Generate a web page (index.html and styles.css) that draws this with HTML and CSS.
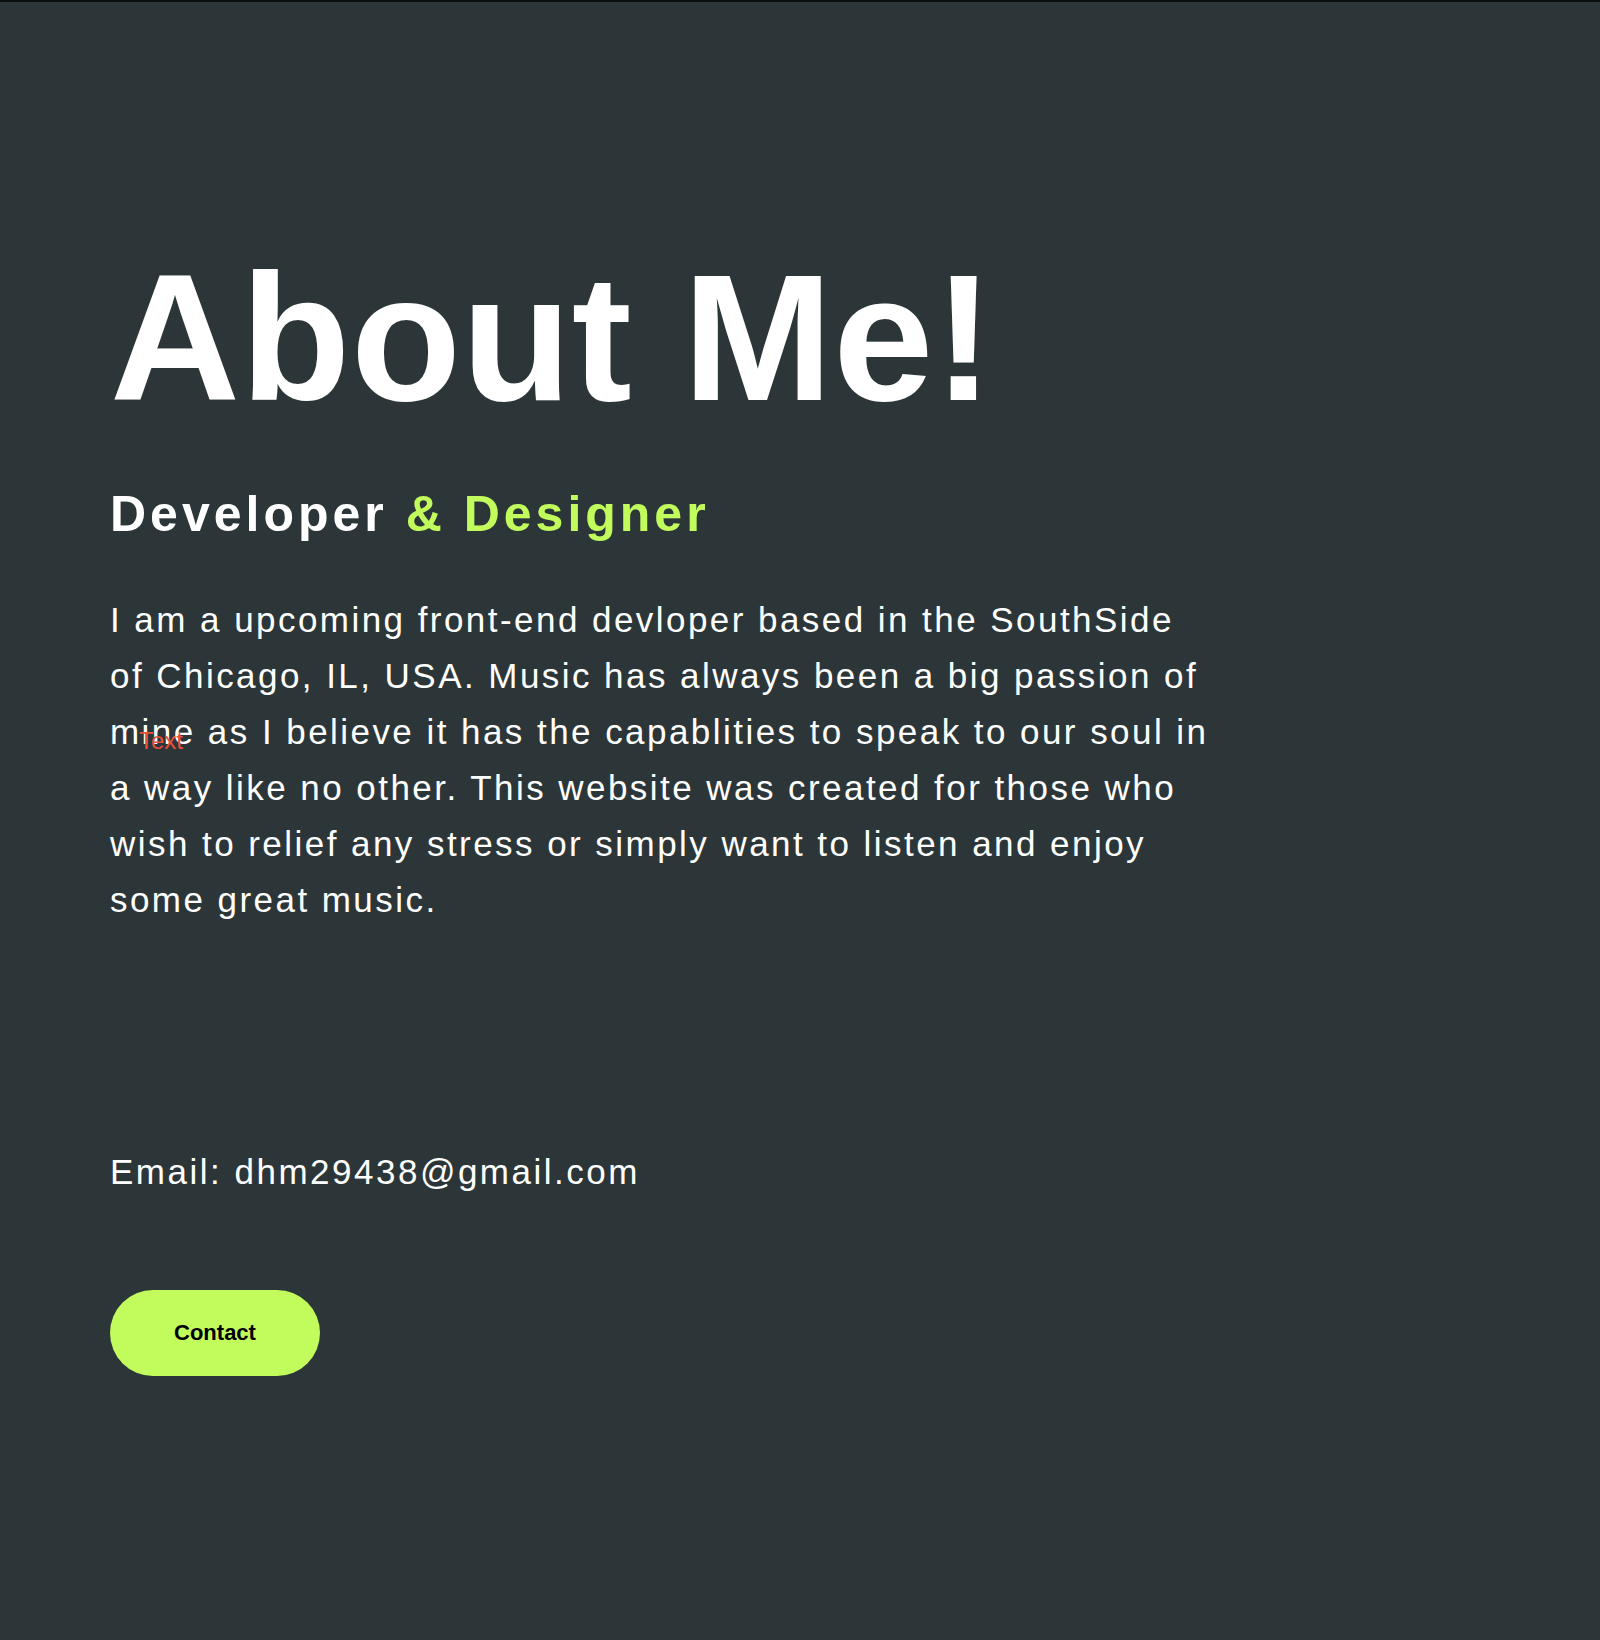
FILE: index.html
```html
<!DOCTYPE html>
<html lang="en">
<head>
<meta charset="utf-8">
<title>About Me</title>
<link rel="stylesheet" href="styles.css">
</head>
<body>
<main class="about">
  <h1 class="title">About Me!</h1>
  <h2 class="subtitle">Developer <span class="accent">&amp; Designer</span></h2>
  <div class="bio-wrap">
    <p class="bio">I am a upcoming front-end devloper based in the SouthSide of Chicago, IL, USA. Music has always been a big passion of mine as I believe it has the capablities to speak to our soul in a way like no other. This website was created for those who wish to relief any stress or simply want to listen and enjoy some great music.</p>
    <span class="tag">Text</span>
  </div>
  <p class="email">Email: dhm29438@gmail.com</p>
  <a class="contact" href="#">Contact</a>
</main>
</body>
</html>
```
FILE: styles.css
```css
html, body {
  margin: 0;
  padding: 0;
}
body {
  background: #2c3639;
  border-top: 2px solid #0c0f10;
  min-height: 1638px;
  font-family: "Liberation Sans", Arial, Helvetica, sans-serif;
  color: #ffffff;
}
.about {
  padding: 232px 0 0 110px;
  display: flex;
  flex-direction: column;
  align-items: flex-start;
}
.title {
  margin: 0;
  font-size: 180px;
  line-height: 207px;
  font-weight: 700;
  letter-spacing: 0.5px;
}
.subtitle {
  margin: 44px 0 0 0;
  font-size: 50px;
  line-height: 58px;
  font-weight: 700;
  letter-spacing: 4px;
}
.accent {
  color: #c2fb5c;
}
.bio-wrap {
  position: relative;
  margin-top: 49px;
  width: 1102px;
}
.bio {
  margin: 0;
  font-size: 35px;
  line-height: 56px;
  letter-spacing: 2.45px;
}
.tag {
  position: absolute;
  left: 29px;
  top: 136px;
  font-size: 24px;
  line-height: 26px;
  color: #e9503d;
}
.email {
  margin: 224px 0 0 0;
  font-size: 35px;
  line-height: 40px;
  letter-spacing: 2.5px;
}
.contact {
  margin-top: 98px;
  width: 210px;
  height: 86px;
  border-radius: 43px;
  background: #c2fb5c;
  color: #000000;
  text-decoration: none;
  font-weight: 700;
  font-size: 22px;
  display: flex;
  align-items: center;
  justify-content: center;
}
```
